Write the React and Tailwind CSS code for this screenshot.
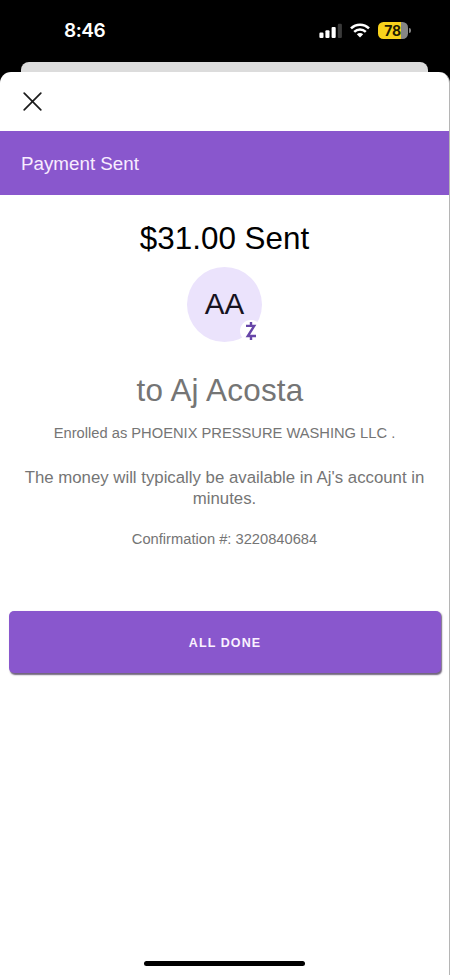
function SignalIcon() {
  return (
    <svg width="24" height="16" viewBox="0 0 24 16" fill="#fff">
      <rect x="0.4" y="9.6" width="4.1" height="5.4" rx="1.1" />
      <rect x="6.4" y="7.2" width="4.1" height="7.8" rx="1.1" />
      <rect x="12.6" y="4" width="4.1" height="11" rx="1.1" />
      <rect x="18.8" y="0.8" width="4.1" height="14.2" rx="1.1" fill="#3a3a3a" />
    </svg>
  );
}

function WifiIcon() {
  return (
    <svg width="20" height="15" viewBox="0 0 20 15" fill="none" stroke="#fff" strokeWidth="2.5">
      <path d="M1 5.4C6 .4 14 .4 19 5.4" />
      <path d="M4.2 8.9C7.5 5.8 12.5 5.8 15.8 8.9" />
      <path d="M10 14.4 6.8 11.2C8.6 9.6 11.4 9.6 13.2 11.2Z" fill="#fff" stroke="none" />
    </svg>
  );
}

function Battery() {
  return (
    <div className="flex items-center gap-px">
      <div className="flex h-[17px] w-[30px] items-center justify-center rounded-[5.5px] bg-linear-to-r from-[#f8d21c] from-78% to-[#858585] to-78% pr-[1px] font-['Inter',sans-serif] text-[14px] leading-none font-bold tracking-[-0.4px] text-[#211b00]">
        78
      </div>
      <div className="h-[5px] w-[2px] rounded-r-full bg-[#858585]" />
    </div>
  );
}

function StatusBar() {
  return (
    <div className="flex h-[62px] items-start justify-between pr-[39px] pl-[64px]">
      <span className="mt-[19px] font-['Inter',sans-serif] text-[19px] leading-6 font-semibold tracking-[-0.5px] text-white">
        8:46
      </span>
      <div className="mt-[22px] flex items-center">
        <SignalIcon />
        <div className="mr-[8px] ml-[7px]">
          <WifiIcon />
        </div>
        <Battery />
      </div>
    </div>
  );
}

function Avatar({ initials }) {
  return (
    <div className="relative mt-[10px] flex size-[75px] items-center justify-center rounded-full bg-[#ebe3fc] text-[29.5px] text-[#17131f]">
      {initials}
      <div className="absolute right-0 bottom-0 flex size-[22px] items-center justify-center rounded-full bg-white">
        <svg width="12" height="20" viewBox="0 0 12 20" fill="none" stroke="#6746a8" strokeWidth="2.4">
          <path d="M1 4.9H9.2L2.8 15H11" />
          <path d="M6 1V4.5M6 15.5V19" />
        </svg>
      </div>
    </div>
  );
}

export default function App() {
  return (
    <div className="flex h-[975px] w-[450px] flex-col overflow-hidden bg-black font-['Liberation_Sans',Arial,sans-serif]">
      <StatusBar />
      <div className="mr-[22px] ml-[21px] h-[10px] shrink-0 rounded-t-[8px] bg-[#dcdcdc]" />
      <main className="flex flex-1 flex-col rounded-t-[11px] border-r border-[#b5b5b5] bg-white">
        <header className="flex h-[59px] shrink-0 items-center pl-[23px]">
          <button aria-label="Close">
            <svg width="19" height="19" viewBox="0 0 19 19" fill="none" stroke="#1c1c1c" strokeWidth="1.7" strokeLinecap="round">
              <path d="M1.2 1.2 17.8 17.8M17.8 1.2 1.2 17.8" />
            </svg>
          </button>
        </header>
        <div className="flex h-[64px] shrink-0 items-center bg-[#8957cd] pt-[2px] pl-[21px] text-[18.8px] text-[#f8edff]">
          Payment Sent
        </div>

        <section className="flex flex-col items-center text-center text-[#757575]">
          <h1 className="mt-[26px] text-[31.4px] leading-9 text-black">$31.00 Sent</h1>
          <Avatar initials="AA" />
          <h2 className="mt-[31px] pr-[9px] text-[31.4px] leading-9 tracking-[0.25px]">to Aj Acosta</h2>
          <p className="mt-[14px] text-[14.7px] leading-5">Enrolled as PHOENIX PRESSURE WASHING LLC .</p>
          <p className="mt-[24px] w-[420px] text-[16.8px] leading-[21px]">
            The money will typically be available in Aj's account in minutes.
          </p>
          <p className="mt-[20px] text-[14.7px] leading-5">Confirmation #: 3220840684</p>
        </section>

        <button className="mt-[62px] mr-[8px] ml-[9px] h-[62px] shrink-0 rounded-[5px] bg-[#8957cd] pt-[2px] text-[12.5px] font-bold tracking-[1.1px] text-[#fbf2ff] shadow-[1px_1.5px_1.5px_#70647c]">
          ALL DONE
        </button>

        <div className="mt-auto mb-[9px] h-[5px] w-[161px] self-center rounded-full bg-black" />
      </main>
    </div>
  );
}
